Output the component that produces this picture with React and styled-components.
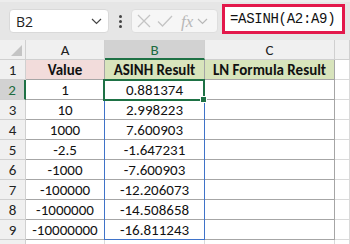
import React from 'react';
import styled, { createGlobalStyle } from 'styled-components';

const GlobalStyle = createGlobalStyle`
  html, body { margin: 0; padding: 0; background: #ffffff; overflow: hidden; }
  * { box-sizing: border-box; }
`;

const Page = styled.div`
  width: 350px;
  height: 244px;
  overflow: hidden;
  font-family: Calibri, Carlito, Lato, "Liberation Sans", sans-serif;
`;

const Toolbar = styled.div`
  height: 40px;
  background: #e6e6e6;
  border-top: 2px solid #ededed;
  display: flex;
  align-items: flex-start;
  padding: 2px 0 0 9px;
`;

const NameBox = styled.div`
  margin-top: 5px;
  width: 100px;
  height: 24px;
  background: #fff;
  border: 1px solid #d9d9d9;
  border-radius: 4px;
  display: flex;
  align-items: center;
  justify-content: space-between;
  padding: 0 6px 0 6px;
  font-family: "Segoe UI", "Open Sans", "Liberation Sans", sans-serif;
  font-size: 14px;
  color: #222;
`;

const Dots = styled.div`
  width: 22px;
  height: 34px;
  display: flex;
  flex-direction: column;
  align-items: center;
  justify-content: center;
  gap: 2px;
  span { width: 3px; height: 3px; background: #444; border-radius: 50%; }
`;

const ButtonGroup = styled.div`
  margin-top: 5px;
  width: 87px;
  height: 24px;
  background: #f6f6f6;
  border: 1px solid #dedede;
  border-radius: 4px;
  display: flex;
  align-items: center;
  padding-left: 4px;
  gap: 4px;
`;

const Fx = styled.span`
  font-family: "Liberation Serif", serif;
  font-style: italic;
  font-size: 17px;
  color: #b8b8b8;
  margin-left: 3px;
  line-height: 1;
`;

const FormulaBox = styled.div`
  margin-left: 4px;
  width: 123px;
  height: 30px;
  background: #fff;
  border: 3px solid #e3184b;
  display: flex;
  align-items: center;
  padding-left: 5px;
  font-family: Consolas, "Liberation Mono", monospace;
  font-size: 14px;
  letter-spacing: -0.3px;
  color: #111;
`;

const Sheet = styled.div`
  display: grid;
  grid-template-columns: 26px 79px 100px 130px 15px;
  grid-template-rows: repeat(11, 20px);
`;

const at = p => `grid-column: ${p.$c}; grid-row: ${p.$r};`;

const Corner = styled.div`
  ${at}
  background: #f0f0f0;
  border-right: 1px solid #d0d0d0;
  border-bottom: 1px solid #d0d0d0;
  position: relative;
  &::after {
    content: '';
    position: absolute;
    right: 3px;
    bottom: 3px;
    width: 0;
    height: 0;
    border-left: 11px solid transparent;
    border-bottom: 11px solid #c4c4c4;
  }
`;

const ColHead = styled.div`
  ${at}
  background: ${p => (p.$active ? '#d2d2d2' : '#f0f0f0')};
  color: ${p => (p.$active ? '#1d6b40' : '#222')};
  border-right: 1px solid #d0d0d0;
  border-bottom: ${p => (p.$active ? '2px solid #1e7145' : '1px solid #d0d0d0')};
  display: flex;
  align-items: center;
  justify-content: center;
  font-size: 15px;
  padding-top: ${p => (p.$active ? '1px' : '0')};
`;

const RowHead = styled.div`
  ${at}
  background: ${p => (p.$active ? '#d2d2d2' : '#f0f0f0')};
  color: ${p => (p.$active ? '#1d6b40' : '#222')};
  border-right: ${p => (p.$active ? '2px solid #1e7145' : '1px solid #d0d0d0')};
  border-bottom: 1px solid #d0d0d0;
  display: flex;
  align-items: center;
  justify-content: center;
  font-size: 15px;
`;

const Cell = styled.div`
  ${at}
  background: ${p => p.$bg || '#fff'};
  border-right: 1px solid ${p => (p.$plain ? '#dadada' : '#a6a6a6')};
  border-bottom: 1px solid ${p => (p.$plain ? '#dadada' : '#a6a6a6')};
  display: flex;
  align-items: center;
  justify-content: center;
  font-size: 15px;
  font-weight: ${p => (p.$bold ? 700 : 400)};
  color: #111;
  white-space: nowrap;
  overflow: hidden;
`;

const RangeOutline = styled.div`
  grid-column: 3;
  grid-row: 3 / 11;
  margin: 0 0 0 -1px;
  border: 1px solid #3f73c9;
  border-top: none;
  pointer-events: none;
`;

const ActiveCell = styled.div`
  grid-column: 3;
  grid-row: 3;
  margin: -1px 0 -1px -2px;
  border: 2px solid #1e7145;
  position: relative;
  pointer-events: none;
  &::after {
    content: '';
    position: absolute;
    right: -4px;
    bottom: -4px;
    width: 5px;
    height: 5px;
    background: #1e7145;
    border: 1px solid #fff;
  }
`;

const values = [
  ['1', '0.881374'],
  ['10', '2.998223'],
  ['1000', '7.600903'],
  ['-2.5', '-1.647231'],
  ['-1000', '-7.600903'],
  ['-100000', '-12.206073'],
  ['-1000000', '-14.508658'],
  ['-10000000', '-16.811243'],
];

function Chevron({ color = '#444' }) {
  return (
    <svg width="11" height="7" viewBox="0 0 11 7">
      <path d="M1 1 L5.5 5.5 L10 1" fill="none" stroke={color} strokeWidth="1.2" />
    </svg>
  );
}

export default function App() {
  return (
    <Page>
      <GlobalStyle />
      <Toolbar>
        <NameBox>
          <span>B2</span>
          <Chevron />
        </NameBox>
        <Dots><span /><span /><span /></Dots>
        <ButtonGroup>
          <svg width="16" height="16" viewBox="0 0 16 16">
            <path d="M2 2 L14 14 M14 2 L2 14" stroke="#c4c4c4" strokeWidth="1.3" fill="none" />
          </svg>
          <svg width="18" height="16" viewBox="0 0 18 16">
            <path d="M2 8.5 L6.5 13 L16 3" stroke="#c4c4c4" strokeWidth="1.3" fill="none" />
          </svg>
          <Fx>fx</Fx>
          <Chevron color="#b8b8b8" />
        </ButtonGroup>
        <FormulaBox>=ASINH(A2:A9)</FormulaBox>
      </Toolbar>
      <Sheet>
        <Corner $c={1} $r={1} />
        <ColHead $c={2} $r={1}>A</ColHead>
        <ColHead $c={3} $r={1} $active>B</ColHead>
        <ColHead $c={4} $r={1}>C</ColHead>
        <ColHead $c={5} $r={1} />

        <RowHead $c={1} $r={2}>1</RowHead>
        <Cell $c={2} $r={2} $bg="#f2dcdb" $bold>Value</Cell>
        <Cell $c={3} $r={2} $bg="#d8e4bc" $bold>ASINH Result</Cell>
        <Cell $c={4} $r={2} $bg="#d8e4bc" $bold>LN Formula Result</Cell>
        <Cell $c={5} $r={2} $plain />

        {values.map(([a, b], i) => (
          <React.Fragment key={i}>
            <RowHead $c={1} $r={i + 3} $active={i === 0}>{i + 2}</RowHead>
            <Cell $c={2} $r={i + 3}>{a}</Cell>
            <Cell $c={3} $r={i + 3}>{b}</Cell>
            <Cell $c={4} $r={i + 3} />
            <Cell $c={5} $r={i + 3} $plain />
          </React.Fragment>
        ))}

        <RowHead $c={1} $r={11} />
        <Cell $c={2} $r={11} $plain />
        <Cell $c={3} $r={11} $plain />
        <Cell $c={4} $r={11} $plain />
        <Cell $c={5} $r={11} $plain />

        <RangeOutline />
        <ActiveCell />
      </Sheet>
    </Page>
  );
}
